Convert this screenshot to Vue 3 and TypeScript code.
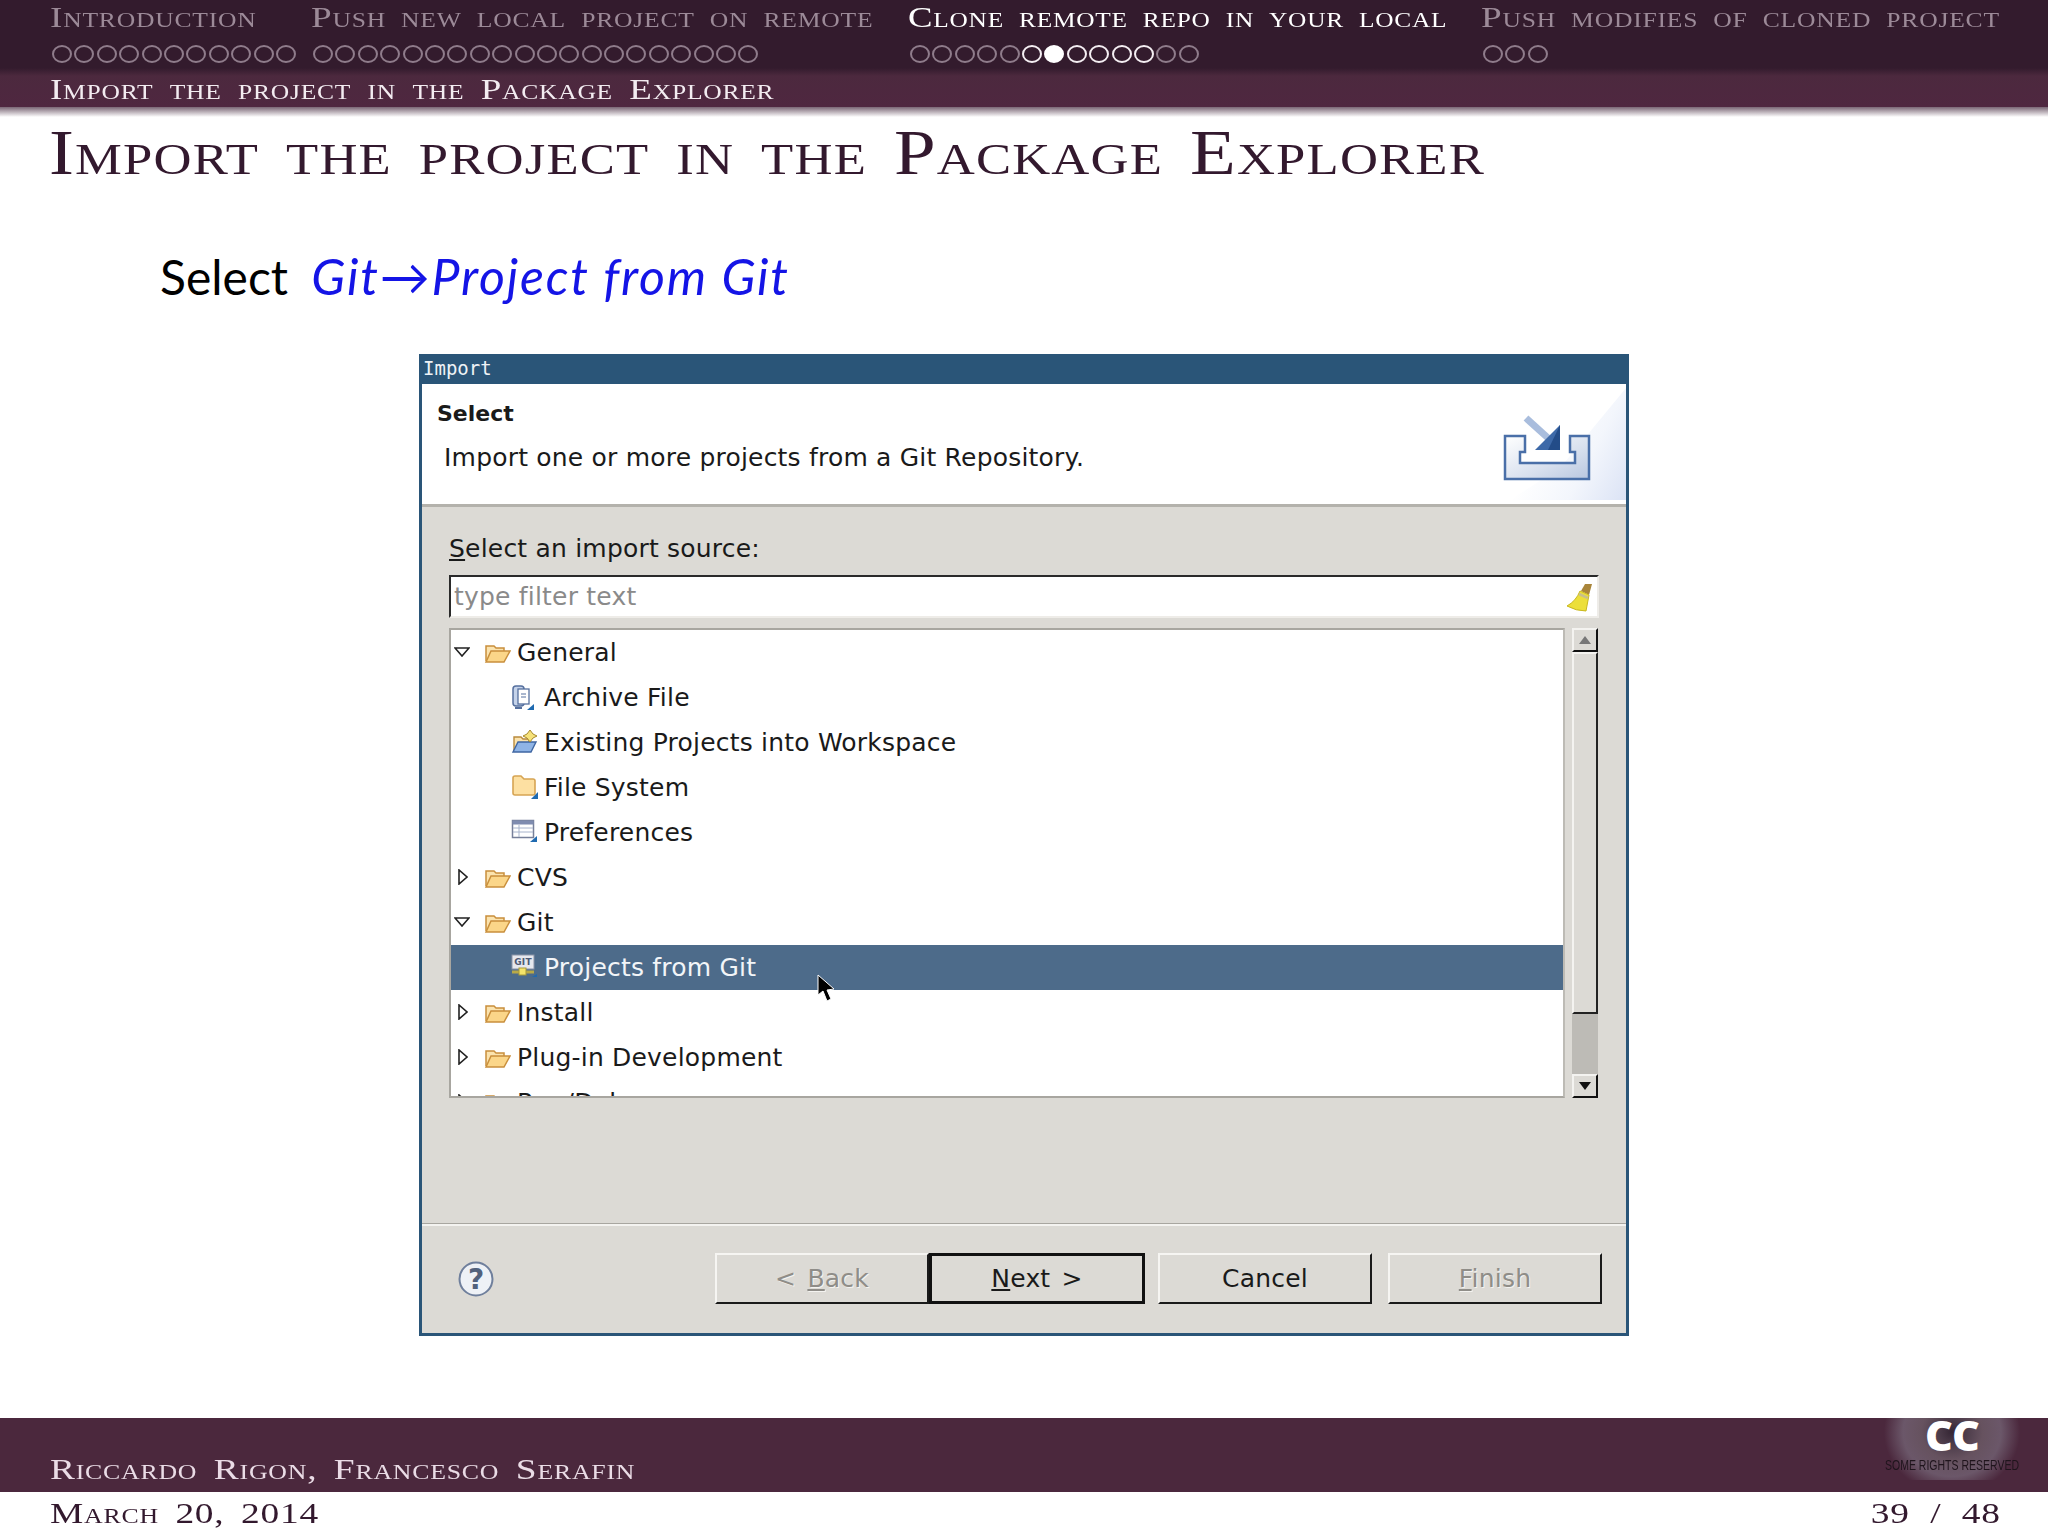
<script setup lang="ts">
interface Section { title: string; dots: number; state: string }
interface Row { label: string; level: number; arrow: string; icon: string; selected?: boolean }

const sections: Section[] = [
  { title: 'Introduction', dots: 11, state: 'dim' },
  { title: 'Push new local project on remote', dots: 20, state: 'dim' },
  { title: 'Clone remote repo in your local', dots: 13, state: 'current' },
  { title: 'Push modifies of cloned project', dots: 3, state: 'dim' },
]

function dotClass(sec: Section, i: number): string {
  if (sec.state !== 'current') return 'dot'
  if (i === 6) return 'dot filled'
  if (i >= 5 && i <= 10) return 'dot on'
  return 'dot'
}

const rows: Row[] = [
  { label: 'General', level: 0, arrow: 'down', icon: 'open' },
  { label: 'Archive File', level: 1, arrow: '', icon: 'archive' },
  { label: 'Existing Projects into Workspace', level: 1, arrow: '', icon: 'existing' },
  { label: 'File System', level: 1, arrow: '', icon: 'folder' },
  { label: 'Preferences', level: 1, arrow: '', icon: 'prefs' },
  { label: 'CVS', level: 0, arrow: 'right', icon: 'open' },
  { label: 'Git', level: 0, arrow: 'down', icon: 'open' },
  { label: 'Projects from Git', level: 1, arrow: '', icon: 'git', selected: true },
  { label: 'Install', level: 0, arrow: 'right', icon: 'open' },
  { label: 'Plug-in Development', level: 0, arrow: 'right', icon: 'open' },
  { label: 'Run/Debug', level: 0, arrow: 'right', icon: 'open' },
]
</script>

<template>
  <div class="slide">
    <header class="head">
      <nav class="nav">
        <div v-for="s in sections" :key="s.title" class="sec" :class="s.state">
          <div class="sec-title"><span class="wide">{{ s.title }}</span></div>
          <div class="dots">
            <i v-for="n in s.dots" :key="n" :class="dotClass(s, n - 1)"></i>
          </div>
        </div>
      </nav>
      <div class="sub"><span class="wide">Import the project in the Package Explorer</span></div>
    </header>
    <div class="shadow"></div>

    <h1 class="title"><span class="wide-t">Import the project in the Package Explorer</span></h1>

    <p class="lead">Select <em>Git→Project from Git</em></p>

    <section class="dialog">
      <div class="titlebar">Import</div>
      <div class="banner">
        <div class="banner-text">
          <div class="b-head">Select</div>
          <div class="b-desc">Import one or more projects from a Git Repository.</div>
        </div>
        <svg class="wiz" width="136" height="120" viewBox="0 0 136 120">
          <defs>
            <linearGradient id="corner" x1="0.2" y1="0.6" x2="1" y2="1">
              <stop offset="0" stop-color="#ffffff" />
              <stop offset="0.5" stop-color="#f3f6fc" />
              <stop offset="1" stop-color="#dbe3f5" />
            </linearGradient>
            <linearGradient id="tray" x1="0" y1="0" x2="1" y2="1">
              <stop offset="0" stop-color="#ffffff" />
              <stop offset="0.6" stop-color="#d8e0ee" />
              <stop offset="1" stop-color="#b9c7e0" />
            </linearGradient>
          </defs>
          <polygon points="136,4 136,116 20,116 70,84" fill="url(#corner)" />
          <path d="M15 52 H35 V68 H30 V79 H85 V68 H80 V52 H99 V95 H15 Z" fill="url(#tray)" stroke="#4a6fa8" stroke-width="2.5" />
          <path d="M36 34 L58 54" stroke="#a9bddd" stroke-width="7" />
          <polygon points="70,41 70,66 45,66" fill="#3d69a8" />
          <polygon points="70,41 70,66 58,66" fill="#234c88" />
        </svg>
      </div>
      <div class="body">
        <div class="src-label"><u>S</u>elect an import source:</div>
        <div class="filter">
          <span>type filter text</span>
          <svg width="28" height="30" viewBox="0 0 28 30">
            <path d="M19 2 L26 2 L23 13 L15 9 Z" fill="#a9853a" />
            <path d="M14 9 L23 13 L20 29 Q10 29 1 24 Q10 19 14 9 Z" fill="#ecdf3a" stroke="#c9b820" stroke-width="1" />
            <path d="M13 12 L22 16" stroke="#c9c08a" stroke-width="2.5" />
          </svg>
        </div>
        <div class="tree-wrap">
          <div class="tree">
            <div v-for="r in rows" :key="r.label" class="row" :class="{ sel: r.selected, child: r.level === 1 }">
              <svg v-if="r.arrow === 'down'" class="arrow" width="16" height="10" viewBox="0 0 16 10">
                <path d="M1 1 H15 L8 9 Z" fill="#fff" stroke="#222" stroke-width="1.6" />
              </svg>
              <svg v-else-if="r.arrow === 'right'" class="arrow r" width="10" height="16" viewBox="0 0 10 16">
                <path d="M1 1 V15 L9 8 Z" fill="#fff" stroke="#222" stroke-width="1.6" />
              </svg>

              <svg v-if="r.icon === 'open'" class="ico" width="27" height="22" viewBox="0 0 27 22">
                <path d="M2 19 V4 H10 L12 6 H20 V10" fill="#fbe3ae" stroke="#c98f3c" stroke-width="1.5" />
                <path d="M2 20 L7 9 H26 L20 20 Z" fill="#fbd689" stroke="#c98f3c" stroke-width="1.5" />
              </svg>
              <svg v-else-if="r.icon === 'archive'" class="ico" width="24" height="28" viewBox="0 0 24 28">
                <rect x="2" y="2" width="11" height="20" rx="3" fill="#c5d3ea" stroke="#56709e" stroke-width="1.5" />
                <rect x="7" y="5" width="11" height="15" fill="#fff" stroke="#56709e" stroke-width="1.3" />
                <path d="M10 10 H15 M10 13 H15" stroke="#56709e" />
                <path d="M4 24 H11" stroke="#56709e" stroke-width="2" />
                <polygon points="23,20 23,26 16,26" fill="#1f6ab0" />
              </svg>
              <svg v-else-if="r.icon === 'existing'" class="ico" width="27" height="25" viewBox="0 0 27 25">
                <path d="M3 22 V8 H10 L12 10 H18 V14" fill="#fbe3ae" stroke="#b98a3c" stroke-width="1.4" />
                <path d="M2 23 L7 13 H25 L20 23 Z" fill="#8fb4e6" stroke="#3f66a3" stroke-width="1.4" />
                <polygon points="19,1 22,5 26,7 22,9 19,13 16,9 12,7 16,5" fill="#f6e27a" stroke="#a88a2c" />
              </svg>
              <svg v-else-if="r.icon === 'folder'" class="ico" width="28" height="26" viewBox="0 0 28 26">
                <path d="M2 19 V4 Q2 2 4 2 H10 L13 5 H22 Q24 5 24 7 V19 Q24 21 22 21 H4 Q2 21 2 19 Z" fill="#fde0a2" stroke="#d6a453" stroke-width="1.6" />
                <polygon points="27,18 27,25 20,25" fill="#1f6ab0" />
              </svg>
              <svg v-else-if="r.icon === 'prefs'" class="ico" width="27" height="24" viewBox="0 0 27 24">
                <rect x="1.5" y="1.5" width="21" height="17" fill="#fff" stroke="#77809a" stroke-width="1.5" />
                <rect x="1.5" y="1.5" width="21" height="4" fill="#7f8cb0" />
                <path d="M2 9 H22 M2 13 H22 M8 6 V18" stroke="#a8b4cc" />
                <polygon points="26,17 26,23 19,23" fill="#1f6ab0" />
              </svg>
              <svg v-else-if="r.icon === 'git'" class="ico" width="27" height="24" viewBox="0 0 27 24">
                <rect x="1" y="1" width="22" height="14" fill="#e6e8ee" stroke="#8a93a6" />
                <text x="12" y="11" text-anchor="middle" class="git-txt">GIT</text>
                <path d="M1 18 H23" stroke="#b8a948" stroke-width="3" />
                <rect x="8" y="14" width="7" height="7" fill="#f4e46a" stroke="#a89a38" />
                <polygon points="26,20 26,23 21,23" fill="#1f6ab0" />
              </svg>

              <span class="lbl">{{ r.label }}</span>
            </div>
            <svg class="cursor" width="20" height="30" viewBox="0 0 20 30">
              <path d="M2 1 V21 L7 17 L11 27 L15 25 L11 16 L18 15 Z" fill="#000" stroke="#fff" stroke-width="1" />
            </svg>
          </div>
          <div class="sbar">
            <div class="sbtn"><svg width="12" height="8" viewBox="0 0 12 8"><path d="M6 0 L12 8 H0 Z" fill="#777" /></svg></div>
            <div class="thumb"></div>
            <div class="trough"></div>
            <div class="sbtn dn"><svg width="12" height="8" viewBox="0 0 12 8"><path d="M0 0 H12 L6 8 Z" fill="#111" /></svg></div>
          </div>
        </div>
      </div>
      <div class="sep"></div>
      <div class="actions">
        <svg class="help" width="36" height="36" viewBox="0 0 36 36">
          <ellipse cx="18" cy="18" rx="16.5" ry="16.5" fill="#eef1f6" stroke="#6f7f9c" stroke-width="2" />
          <text x="18" y="28" text-anchor="middle" class="help-q">?</text>
        </svg>
        <div class="btns">
          <button class="btn off" type="button">&lt; <u>B</u>ack</button>
          <button class="btn def" type="button"><u>N</u>ext &gt;</button>
          <button class="btn cancel" type="button">Cancel</button>
          <button class="btn off finish" type="button"><u>F</u>inish</button>
        </div>
      </div>
    </section>

    <div class="spacer"></div>

    <footer class="foot">
      <div class="foot-band">
        <span class="wide-f auth">Riccardo Rigon, Francesco Serafin</span>
        <div class="cc">
          <div class="cc-mark">CC</div>
          <div class="cc-txt">SOME RIGHTS RESERVED</div>
        </div>
      </div>
      <div class="foot-line">
        <span class="wide-f">March 20, 2014</span>
        <span class="wide-p">39 / 48</span>
      </div>
    </footer>
  </div>
</template>

<style>
html, body { margin: 0; background: #fff; }
</style>

<style scoped>
.slide {
  width: 2048px;
  height: 1536px;
  display: flex;
  flex-direction: column;
  overflow: hidden;
  background: #fff;
  font-family: "Liberation Serif", serif;
}
.head {
  height: 107px;
  background: linear-gradient(to bottom, #331b2d 0, #331b2d 68px, #4c293e 76px, #4f2740 107px);
  flex: none;
}
.shadow {
  height: 10px;
  flex: none;
  background: linear-gradient(to bottom, #7a6675, #fff);
}
.nav {
  display: grid;
  grid-template-columns: 261px 597px 573px 1fr;
  padding: 1px 0 0 50px;
  height: 68px;
  box-sizing: border-box;
}
.sec-title {
  font-size: 29px;
  line-height: 32px;
  font-variant: small-caps;
  color: #9c8a98;
  white-space: nowrap;
}
.current .sec-title { color: #fff; }
.wide {
  display: inline-block;
  transform: scaleX(1.28);
  transform-origin: left;
  letter-spacing: 0.6px;
  word-spacing: 4px;
}
.current .wide { transform: scaleX(1.268); }
.sub .wide { transform: scaleX(1.276); word-spacing: 5px; }
.dots {
  display: flex;
  gap: 2.4px;
  margin: 12px 0 0 2px;
}
.dot {
  width: 20px;
  height: 18px;
  box-sizing: border-box;
  border: 2px solid #8f7c8b;
  border-radius: 50%;
  display: block;
  flex: none;
}
.dot.on { border-color: #f4eef2; }
.dot.filled { border-color: #fff; background: #fff; }
.sub {
  font-size: 29px;
  line-height: 32px;
  font-variant: small-caps;
  color: #f3ecf1;
  padding: 5px 0 0 50px;
  white-space: nowrap;
}
.title {
  margin: 0;
  padding: 1px 0 0 49px;
  font-size: 64px;
  line-height: 70px;
  font-weight: 400;
  font-variant: small-caps;
  color: #33192e;
  white-space: nowrap;
  height: 89px;
  box-sizing: border-box;
}
.wide-t {
  display: inline-block;
  transform: scaleX(1.17);
  transform-origin: left;
  letter-spacing: 1px;
  word-spacing: 6px;
}
.lead {
  margin: 0;
  padding: 40px 0 0 160px;
  height: 148px;
  box-sizing: border-box;
  font-family: Lato, "Open Sans", sans-serif;
  font-size: 48px;
  line-height: 60px;
  color: #000;
  white-space: nowrap;
}
.lead em {
  color: #1414e6;
  margin-left: 11px;
  font-size: 50px;
  letter-spacing: 1.8px;
}
.dialog {
  width: 1210px;
  height: 982px;
  margin-left: 419px;
  box-sizing: border-box;
  border: 3px solid #2a5578;
  border-top: 0;
  display: flex;
  flex-direction: column;
  background: #dcdad5;
  font-family: "DejaVu Sans", sans-serif;
  color: #1a1a1a;
  flex: none;
}
.titlebar {
  height: 30px;
  margin: 0 -3px;
  padding-left: 4px;
  box-sizing: border-box;
  background: #2a5578;
  color: #eef2f6;
  font-family: "DejaVu Sans Mono", monospace;
  font-size: 19px;
  line-height: 28px;
}
.banner {
  height: 123px;
  box-sizing: border-box;
  background: #fff;
  border-bottom: 3px solid #b4b2ac;
  display: flex;
  justify-content: space-between;
}
.banner-text { padding-left: 15px; }
.b-head { font-weight: 700; font-size: 22px; line-height: 26px; margin-top: 17px; }
.b-desc { font-size: 25px; letter-spacing: 0.2px; line-height: 30px; margin: 16px 0 0 7px; white-space: nowrap; }
.body { padding: 0 27px 0 27px; }
.src-label { font-size: 25px; letter-spacing: 0.2px; line-height: 30px; margin-top: 27px; }
.filter {
  margin-top: 11px;
  height: 43px;
  box-sizing: border-box;
  background: #fff;
  border: 2px solid;
  border-color: #2a2a2a #eeece8 #eeece8 #2a2a2a;
  display: flex;
  justify-content: space-between;
  align-items: center;
  padding: 0 3px 0 3px;
  font-size: 25px;
  letter-spacing: 0.2px;
  color: #8a8a8a;
}
.tree-wrap {
  margin-top: 10px;
  height: 470px;
  display: flex;
  gap: 7px;
  padding-right: 1px;
}
.tree {
  position: relative;
  flex: 1;
  background: #fff;
  border: 2px solid;
  border-color: #a8a6a0 #bdbbb5 #a8a6a0 #a8a6a0;
  overflow: hidden;
  box-sizing: border-box;
}
.row {
  height: 45px;
  display: flex;
  align-items: center;
  font-size: 25px;
  letter-spacing: 0.2px;
  white-space: nowrap;
  position: relative;
  padding-left: 66px;
  flex: none;
}
.row.child { padding-left: 93px; }
.row.sel { background: #4d6b8a; color: #f2f5f8; }
.arrow { position: absolute; left: 3px; top: 17px; }
.arrow.r { left: 7px; top: 14px; }
.ico { position: absolute; left: 33px; top: 12px; }
.row.child .ico { left: 60px; top: 9px; }
.git-txt { font-family: "DejaVu Sans", sans-serif; font-size: 9px; font-weight: 700; fill: #4d5a75; }
.cursor { position: absolute; left: 365px; top: 344px; }
.sbar {
  width: 26px;
  display: flex;
  flex-direction: column;
  flex: none;
  box-sizing: border-box;
}
.sbtn {
  height: 24px;
  flex: none;
  display: flex;
  align-items: center;
  justify-content: center;
  background: #dcdad5;
  border: 2px solid;
  border-color: #f4f3f0 #111 #111 #f4f3f0;
  box-sizing: border-box;
}
.thumb {
  height: 362px;
  flex: none;
  background: #dcdad5;
  border: 2px solid;
  border-color: #f4f3f0 #222 #222 #f4f3f0;
  box-sizing: border-box;
}
.trough { flex: 1; background: #bdbbb6; }
.sep {
  height: 3px;
  margin-top: 125px;
  background: linear-gradient(to bottom, #a8a6a0 0 50%, #f4f3f0 50%);
  flex: none;
}
.actions {
  display: flex;
  align-items: flex-start;
  justify-content: space-between;
  padding: 27px 24px 0 27px;
}
.help { margin: 8px 0 0 9px; }
.help-q { font-family: "DejaVu Sans", sans-serif; font-size: 28px; font-weight: 700; fill: #52617c; }
.btns { display: flex; }
.btn {
  width: 214px;
  height: 51px;
  padding: 0;
  box-sizing: border-box;
  background: #dcdad5;
  border: 2px solid;
  border-color: #f6f5f2 #1a1a1a #1a1a1a #f6f5f2;
  border-radius: 0;
  font-family: "DejaVu Sans", sans-serif;
  font-size: 25px;
  letter-spacing: 0.2px;
  word-spacing: 3px;
  color: #1a1a1a;
}
.btn.off { color: #8f8d88; text-shadow: 1px 1px 0 #f4f3f0; }
.btn.def {
  width: 216px;
  border: 3px solid #111;
}
.btn.cancel { margin-left: 13px; }
.btn.finish { margin-left: 16px; }
.spacer { height: 82px; flex: none; }
.foot { flex: none; }
.foot-band {
  height: 74px;
  background: #4b283d;
  position: relative;
  padding-left: 50px;
  box-sizing: border-box;
}
.auth {
  color: #eadce6;
  position: relative;
  top: 33px;
}
.wide-f, .wide-p {
  display: inline-block;
  font-size: 29px;
  line-height: 36px;
  font-variant: small-caps;
  white-space: nowrap;
  transform: scaleX(1.29);
  transform-origin: left;
  letter-spacing: 0.6px;
  word-spacing: 5px;
}
.foot-line {
  height: 44px;
  display: flex;
  justify-content: space-between;
  padding: 0 47px 0 50px;
  color: #33192e;
}
.foot-line span { line-height: 42px; }
.wide-p { transform-origin: right; word-spacing: 8px; }
.cc {
  position: absolute;
  left: 1884px;
  top: 0;
  width: 136px;
  height: 62px;
  background: radial-gradient(ellipse 68px 62px at 50% 14px, #352634 0, #4a3a48 18%, #66525f 45%, #6b5769 72%, #4b283d 100%);
}
.cc-mark {
  font-family: "Open Sans", sans-serif;
  font-weight: 800;
  font-size: 43px;
  line-height: 34px;
  color: #fff;
  letter-spacing: -1px;
  text-align: center;
}
.cc-txt {
  display: flex;
  justify-content: center;
  font-family: "Liberation Sans", sans-serif;
  font-size: 15px;
  line-height: 16px;
  margin-top: 5px;
  color: #1f141c;
  white-space: nowrap;
  transform: scaleX(0.7);
}
</style>
